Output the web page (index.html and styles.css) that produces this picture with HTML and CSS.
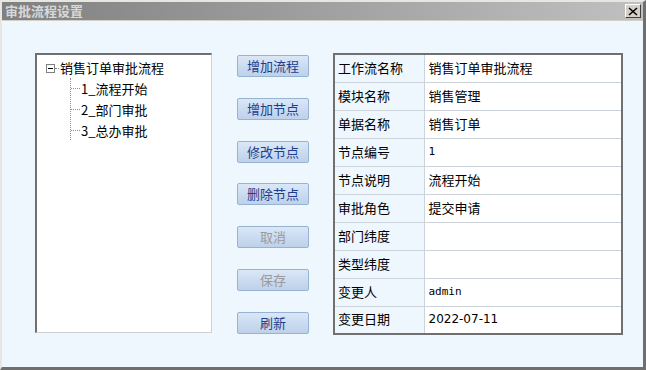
FILE: index.html
```html
<!DOCTYPE html>
<html lang="zh-CN">
<head>
    <meta charset="UTF-8">
    <title>审批流程设置</title>
    <link rel="stylesheet" href="styles.css">
</head>
<body>
    <div class="window">
        <!-- Title Bar -->
        <div class="titlebar">
            <span class="title">审批流程设置</span>
            <span class="close">
                <svg width="10" height="9" viewBox="0 0 10 9"><path d="M1 1 L9 8 M9 1 L1 8" stroke="#000" stroke-width="1.6"/></svg>
            </span>
        </div>

        <div class="content">
            <!-- Tree -->
            <div class="tree">
                <div class="tree-root">
                    <span class="toggle"></span><span class="dots-h"></span>销售订单审批流程
                </div>
                <ul class="tree-children">
                    <li>1_流程开始</li>
                    <li>2_部门审批</li>
                    <li>3_总办审批</li>
                </ul>
            </div>

            <!-- Buttons -->
            <div class="buttons">
                <button class="btn">增加流程</button>
                <button class="btn">增加节点</button>
                <button class="btn">修改节点</button>
                <button class="btn">删除节点</button>
                <button class="btn disabled">取消</button>
                <button class="btn disabled">保存</button>
                <button class="btn">刷新</button>
            </div>

            <!-- Properties -->
            <table class="props">
                <tr><td class="label">工作流名称</td><td>销售订单审批流程</td></tr>
                <tr><td class="label">模块名称</td><td>销售管理</td></tr>
                <tr><td class="label">单据名称</td><td>销售订单</td></tr>
                <tr><td class="label">节点编号</td><td class="mono">1</td></tr>
                <tr><td class="label">节点说明</td><td>流程开始</td></tr>
                <tr><td class="label">审批角色</td><td>提交申请</td></tr>
                <tr><td class="label">部门纬度</td><td></td></tr>
                <tr><td class="label">类型纬度</td><td></td></tr>
                <tr><td class="label">变更人</td><td class="mono">admin</td></tr>
                <tr><td class="label">变更日期</td><td class="small">2022-07-11</td></tr>
            </table>
        </div>
    </div>
</body>
</html>
```

FILE: styles.css
```css
* {
    margin: 0;
    padding: 0;
    box-sizing: border-box;
}

body {
    font-family: "Noto Sans CJK SC", "DejaVu Sans", sans-serif;
    font-size: 13px;
    color: #000;
    background: #d4d0c8;
}

.window {
    width: 646px;
    height: 370px;
    border-top: 2px solid #e8e6e0;
    border-left: 2px solid #e8e6e0;
    border-right: 3px solid #6f6f6f;
    border-bottom: 3px solid #6f6f6f;
    background: #eef6fe;
    display: flex;
    flex-direction: column;
}

/* Title Bar */
.titlebar {
    height: 19px;
    background: linear-gradient(to right, #808080, #c0c0c0);
    display: flex;
    align-items: center;
    justify-content: space-between;
    padding: 0 2px 0 3px;
    border-bottom: 1px solid #d4d0c8;
}

.title {
    color: #d8d8d8;
    font-weight: bold;
    font-size: 13px;
    line-height: 18px;
}

.close {
    width: 16px;
    height: 14px;
    background: #d4d0c8;
    border-top: 1px solid #fff;
    border-left: 1px solid #fff;
    border-right: 1px solid #404040;
    border-bottom: 1px solid #404040;
    display: flex;
    align-items: center;
    justify-content: center;
}

/* Content */
.content {
    display: flex;
    padding: 32px 0 0 33px;
}

.tree {
    width: 177px;
    height: 280px;
    background: #fff;
    border-top: 2px solid #707070;
    border-left: 2px solid #707070;
    border-right: 1px solid #d0d0d0;
    border-bottom: 1px solid #d0d0d0;
    padding: 3px 0 0 9px;
}

.tree-root {
    display: flex;
    align-items: center;
    height: 20px;
    line-height: 20px;
}

.toggle {
    width: 9px;
    height: 9px;
    border: 1px solid #808080;
    position: relative;
}

.toggle::after {
    content: "";
    position: absolute;
    left: 1px;
    top: 3px;
    width: 5px;
    height: 1px;
    background: #000;
}

.dots-h {
    width: 4px;
    border-top: 1px dotted #808080;
    margin-right: 1px;
}

.tree-children {
    list-style: none;
    margin-left: 24px;
    border-left: 1px dotted #909090;
    height: 62px;
}

.tree-children li {
    height: 21px;
    line-height: 21px;
    display: flex;
    align-items: center;
}

.tree-children li::before {
    content: "";
    width: 9px;
    border-top: 1px dotted #909090;
    margin-right: 1px;
}

/* Buttons */
.buttons {
    width: 72px;
    height: 279px;
    margin: 2px 24px 0 25px;
    display: flex;
    flex-direction: column;
    justify-content: space-between;
}

.btn {
    height: 22px;
    font-family: inherit;
    font-size: 13px;
    color: #1d3d8d;
    background: linear-gradient(to bottom, #dae7f7 0%, #cbdcf1 50%, #bdd1ea 100%);
    border: 1px solid #97b3d3;
    border-radius: 2px;
    line-height: 18px;
}

.btn.disabled {
    color: #9a9a9a;
}

/* Properties Table */
.props {
    width: 290px;
    height: 280px;
    border-collapse: collapse;
    border: 2px solid #707070;
    background: #fff;
}

.props td {
    height: 28px;
    border: 1px solid #cdd3da;
    padding: 0 4px 2px;
    white-space: nowrap;
}

.props td.label {
    width: 90px;
    background: #eef6fe;
    padding-left: 3px;
}

.props td.mono {
    font-family: "DejaVu Sans Mono", monospace;
    font-size: 11px;
}

.props td.small {
    font-family: "DejaVu Sans", sans-serif;
    font-size: 12px;
}
```
